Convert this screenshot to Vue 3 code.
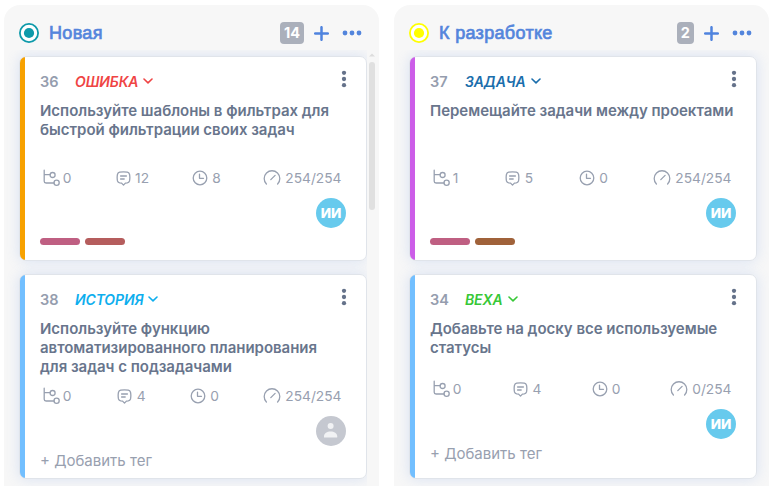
<script setup>
const columns = [
  {
    name: 'Новая', color: '#0e9aaa', count: 14, scroll: true,
    cards: [
      { id: 36, type: 'ОШИБКА', typeColor: '#ef4444', bar: '#f7a100', title: 'Используйте шаблоны в фильтрах для быстрой фильтрации своих задач', stats: ['0', '12', '8', '254/254'], offset: 28, user: 'ИИ', tags: ['#bf5f82', '#b55d5d'] },
      { id: 38, type: 'ИСТОРИЯ', typeColor: '#0daeee', bar: '#72bfff', title: 'Используйте функцию автоматизированного планирования для задач с подзадачами', stats: ['0', '4', '0', '254/254'], offset: 9, user: '', tags: [] },
    ],
  },
  {
    name: 'К разработке', color: '#ffff00', count: 2, scroll: false,
    cards: [
      { id: 37, type: 'ЗАДАЧА', typeColor: '#1b6eac', bar: '#cc5de8', title: 'Перемещайте задачи между проектами', stats: ['1', '5', '0', '254/254'], offset: 47, user: 'ИИ', tags: ['#bf5f82', '#a0623a'] },
      { id: 34, type: 'ВЕХА', typeColor: '#37c837', bar: '#72bfff', title: 'Добавьте на доску все используемые статусы', stats: ['0', '4', '0', '0/254'], offset: 21, user: 'ИИ', tags: [] },
    ],
  },
]
</script>

<template>
  <main class="board">
    <section v-for="col in columns" :key="col.name" class="column">
      <header class="head">
        <svg class="status" viewBox="0 0 20 20" :style="{ color: col.color }">
          <circle cx="10" cy="10" r="9.1" fill="#fff" stroke="currentColor" stroke-width="1.8" />
          <circle cx="10" cy="10" r="5.1" fill="currentColor" />
        </svg>
        <h2>{{ col.name }}</h2>
        <span class="count">{{ col.count }}</span>
        <svg class="plus" viewBox="0 0 15 15"><path d="M7.5 1.2v12.6M1.2 7.5h12.6" /></svg>
        <svg class="more" viewBox="0 0 20 6">
          <circle cx="3" cy="3" r="2.4" /><circle cx="10" cy="3" r="2.4" /><circle cx="17" cy="3" r="2.4" />
        </svg>
      </header>
      <div class="body">
        <div class="list" :class="{ narrow: col.scroll }">
          <article v-for="card in col.cards" :key="card.id" class="card" :style="{ '--bar': card.bar }">
            <div class="top">
              <span class="id">{{ card.id }}</span>
              <span class="type" :style="{ color: card.typeColor }">
                {{ card.type }}
                <svg class="chev" viewBox="0 0 10 6"><path d="M1 1l4 3.8L9 1" /></svg>
              </span>
              <svg class="kebab" viewBox="0 0 6 18">
                <circle cx="3" cy="2.8" r="2.15" /><circle cx="3" cy="9" r="2.15" /><circle cx="3" cy="15.2" r="2.15" />
              </svg>
            </div>
            <h3>{{ card.title }}</h3>
            <div class="stats" :style="{ marginTop: card.offset + 'px' }">
              <span class="stat tree">
                <svg width="18" height="18" viewBox="0 0 18 18">
                  <path d="M1.2 1.2v11c0 1 .7 1.8 1.8 1.8h8.2M1.2 5.7h6" />
                  <circle cx="9.6" cy="6" r="2.5" /><circle cx="13.6" cy="13.8" r="2.6" />
                </svg>{{ card.stats[0] }}
              </span>
              <span class="stat talk">
                <svg width="15" height="16" viewBox="0 0 15 16">
                  <path d="M3.7 2.2Q7.5 1.4 11.3 2.2Q13 2.6 13.5 4.2Q14.2 7.6 13.5 11Q13 12.6 11.3 12.9L9.4 13.1L7.5 15.1L5.6 13.1L3.7 12.9Q2 12.6 1.5 11Q.8 7.6 1.5 4.2Q2 2.6 3.7 2.2Z" />
                  <path d="M4.6 6h5.8M4.6 9h3.6" />
                </svg>{{ card.stats[1] }}
              </span>
              <span class="stat clock">
                <svg width="16" height="16" viewBox="0 0 16 16">
                  <circle cx="8" cy="8" r="6.8" /><path d="M7.5 4.2v4.1h4" />
                </svg>{{ card.stats[2] }}
              </span>
              <span class="stat gauge">
                <svg width="18" height="16" viewBox="0 0 18 16">
                  <path d="M3.4 14A7.8 7.8 0 1 1 14.6 14M7.8 9.6l4.3-4.2" />
                </svg>{{ card.stats[3] }}
              </span>
            </div>
            <div class="people">
              <span v-if="card.user" class="avatar">{{ card.user }}</span>
              <span v-else class="avatar empty">
                <svg viewBox="0 0 30 30"><circle cx="14.6" cy="10" r="3" /><path d="M8 21.5v-1.2c0-3 3-4.8 6.6-4.8s6.6 1.8 6.6 4.8v1.2z" /></svg>
              </span>
            </div>
            <div v-if="card.tags.length" class="tags">
              <i v-for="tag in card.tags" :key="tag" :style="{ background: tag }"></i>
            </div>
            <div v-else class="add">+ Добавить тег</div>
          </article>
        </div>
        <div v-if="col.scroll" class="scroll">
          <svg viewBox="0 0 6 4"><path d="M0 3.5L3 .5l3 3z" /></svg>
          <span></span>
        </div>
      </div>
    </section>
  </main>
</template>

<style>
body { background: #fff; overflow: hidden; }
</style>

<style scoped>
* { box-sizing: border-box; }
.board { display: flex; gap: 15px; height: 486px; padding: 5px 8px 0 4px; font-family: Inter, sans-serif; }
.column { display: flex; flex-direction: column; width: 375px; background: #f7f7f7; border-radius: 16px 16px 0 0; overflow: hidden; }
.head { display: flex; align-items: center; flex: none; height: 45px; padding: 11px 17.5px 0 15px; }
.status { width: 20px; height: 20px; }
h2 { flex: 1; margin: 0 0 0 10px; font: 400 18px/22px "Liberation Sans", sans-serif; -webkit-text-stroke: .7px #5485dc; letter-spacing: .32px; color: #5485dc; white-space: nowrap; }
.count { height: 22px; padding: 0 4px; border-radius: 4px; background: #abb0bb; color: #fff; font: 700 14.5px/22px Inter, sans-serif; }
.plus { width: 15px; height: 15px; margin: 0 12.5px 0 10px; stroke: #4f83de; stroke-width: 2.5; stroke-linecap: round; }
.more { width: 20px; height: 6px; fill: #5385dc; }
.body { display: flex; flex: 1; min-height: 0; }
.list { display: flex; flex-direction: column; gap: 13px; flex: 1; padding: 6px 12px 0 15px; overflow: hidden; }
.narrow { flex: none; width: 363px; padding-right: 0; }
.card { position: relative; display: flex; flex-direction: column; flex: none; height: 205px; padding: 13px 20px 0; border: 1px solid #e0e4ea; border-radius: 7px; background: linear-gradient(90deg, var(--bar) 5px, #fff 5px); box-shadow: 0 0 14px rgba(100, 145, 230, .2); }
.top { display: flex; align-items: center; height: 22px; }
.id { width: 35px; color: #959dae; font-size: 14.5px; font-weight: 600; }
.type { display: flex; align-items: center; gap: 5px; flex: 1; padding-top: 1px; font-size: 14px; letter-spacing: -.13px; font-weight: 600; font-style: italic; }
.chev { width: 10px; height: 6px; margin-bottom: 1px; fill: none; stroke: currentColor; stroke-width: 1.6; stroke-linecap: round; stroke-linejoin: round; }
.kebab { width: 6px; height: 18px; margin: 0 -.6px 4px 0; fill: #65728a; }
h3 { width: 306px; margin: 9px 0 0; color: #68758c; font-size: 15px; letter-spacing: -.02px; line-height: 19px; font-weight: 600; }
.stats { display: flex; justify-content: space-between; align-items: center; flex: none; width: 301.5px; height: 22px; padding-left: 2.5px; }
.stat { display: flex; align-items: center; color: #98a0b0; font-size: 13.75px; line-height: 17px; }
.stat svg { fill: none; stroke: #98a0b0; stroke-width: 1.3; stroke-linecap: round; stroke-linejoin: round; }
.tree svg { margin-right: 2.3px; }
.talk svg { margin-right: 4.5px; }
.clock svg { margin-right: 4px; }
.gauge svg { margin-right: 4.5px; }
.talk, .clock { transform: translateX(1px); }
.people { display: flex; justify-content: flex-end; margin-top: 9px; }
.avatar { display: flex; justify-content: center; align-items: center; width: 30px; height: 30px; border-radius: 50%; background: #67caed; color: #fff; font: 800 13.5px Inter, sans-serif; }
.empty { background: #c5c8d0; }
.empty svg { width: 30px; height: 30px; fill: #f1f2f4; }
.tags { display: flex; gap: 5px; margin-top: 10px; }
.tags i { width: 40px; height: 7px; border-radius: 4px; }
.add { margin-top: 4px; color: #98a0af; font-size: 15px; line-height: 22px; }
.scroll { display: flex; flex-direction: column; align-items: center; width: 10px; padding-top: 3px; }
.scroll svg { width: 6px; height: 4px; fill: #ddd; }
.scroll span { width: 6px; height: 148px; margin-top: 5px; border-radius: 3px; background: #e0e0e0; }
</style>
